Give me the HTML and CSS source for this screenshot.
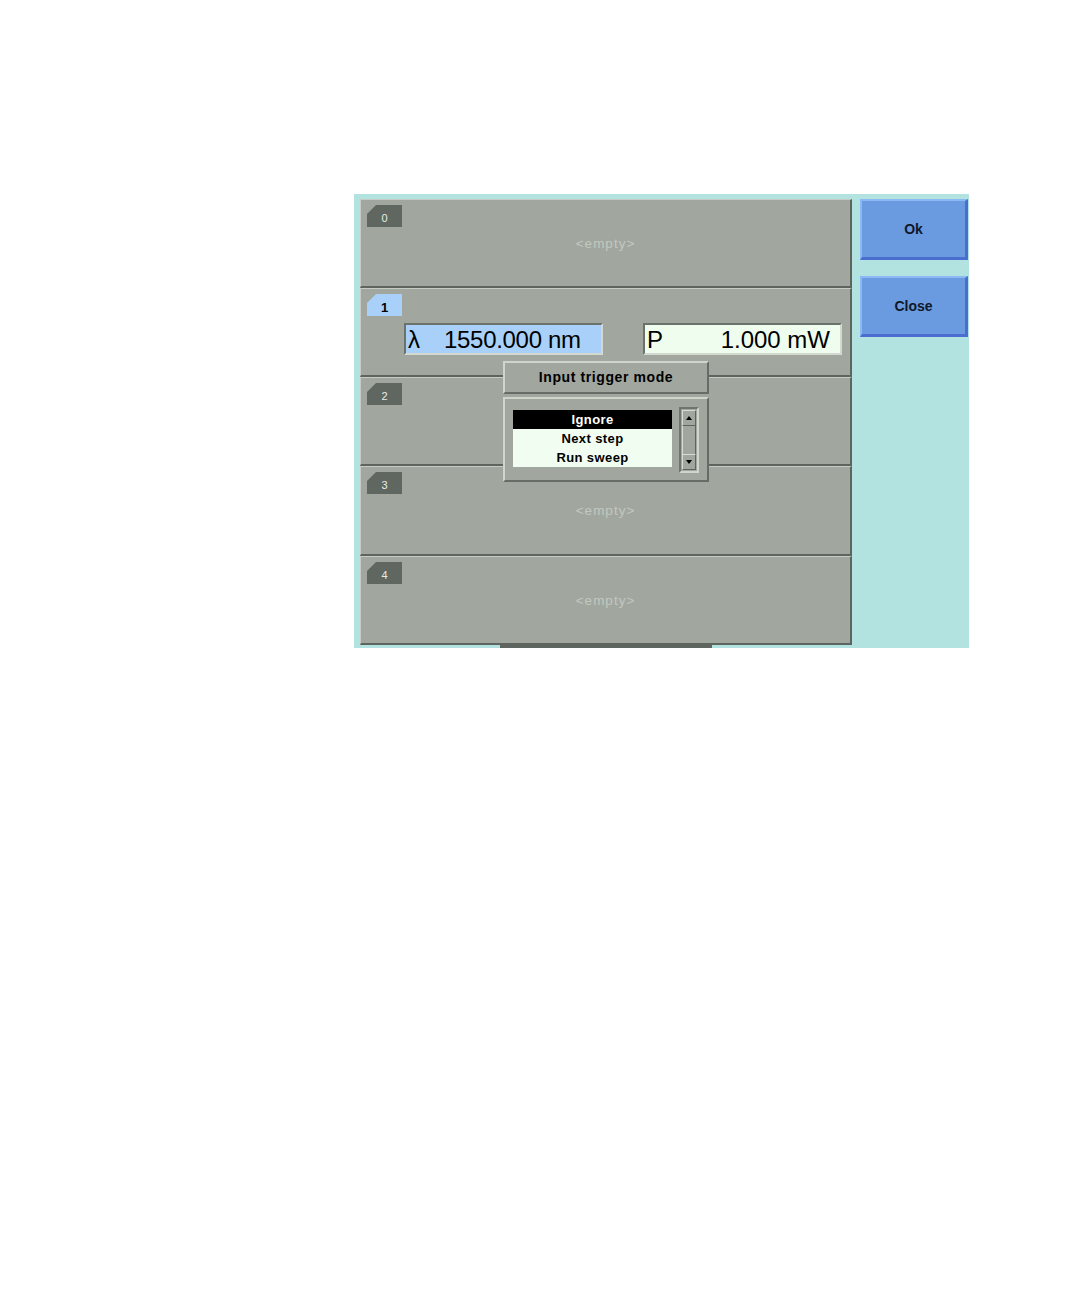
FILE: index.html
```html
<!DOCTYPE html>
<html>
<head>
<meta charset="utf-8">
<link rel="stylesheet" href="styles.css">
</head>
<body>
<div class="page">
  <div class="screen">
    <div class="rows">
      <div class="row"><div class="tab">0</div><div class="empty">&lt;empty&gt;</div></div>
      <div class="row">
        <div class="tab active">1</div>
        <div class="fields">
          <div class="field lambda"><span class="sym">λ</span><span class="val">1550.000 nm</span></div>
          <div class="field power"><span class="sym">P</span><span class="val">1.000 mW</span></div>
        </div>
      </div>
      <div class="row"><div class="tab">2</div></div>
      <div class="row tall"><div class="tab">3</div><div class="empty">&lt;empty&gt;</div></div>
      <div class="row"><div class="tab">4</div><div class="empty">&lt;empty&gt;</div></div>
      <div class="popup">
        <div class="pop-title">Input trigger mode</div>
        <div class="pop-body">
          <div class="list">
            <div class="item sel">Ignore</div>
            <div class="item">Next step</div>
            <div class="item">Run sweep</div>
          </div>
          <div class="scroll">
            <div class="sbtn"><span class="arrow up"></span></div>
            <div class="strack"></div>
            <div class="sbtn"><span class="arrow down"></span></div>
          </div>
        </div>
      </div>
      <div class="shadow"></div>
    </div>
    <div class="side">
      <div class="btn">Ok</div>
      <div class="btn">Close</div>
    </div>
  </div>
</div>
</body>
</html>
```
FILE: styles.css
```css
html, body { margin: 0; padding: 0; background: #ffffff; }
body { width: 1080px; height: 1296px; font-family: "Liberation Sans", Arial, sans-serif; }
.page { padding: 194px 0 0 354px; }
.screen {
  width: 615px; height: 454px; box-sizing: border-box;
  background: #b2e3e1; padding: 5px 0 0 6px;
  display: flex;
}
.rows { position: relative; width: 492px; display: flex; flex-direction: column; }
.row {
  position: relative; height: 89px; flex: none; box-sizing: border-box;
  background: #a1a69e;
  border-top: 1px solid #c6cbc3; border-left: 1px solid #c6cbc3;
  border-bottom: 2px solid #5e645e; border-right: 2px solid #5e645e;
  padding: 5px 0 0 6px;
}
.row.tall { height: 90px; }
.tab {
  width: 35px; height: 22px; background: #5f6760; color: #e8ece6;
  font-size: 11px; line-height: 26px; text-align: center;
  clip-path: polygon(9px 0, 100% 0, 100% 100%, 0 100%, 0 9px);
}
.tab.active { background: #a8d0f8; color: #000; font-weight: bold; font-size: 13px; line-height: 27px; }
.empty {
  text-align: center; color: #c3c8c0; font-size: 13.5px; letter-spacing: 1px;
  margin: 9px 6px 0 0;
}
.fields { display: flex; justify-content: space-between; padding: 7px 8px 0 37px; }
.field {
  width: 199px; height: 32px; box-sizing: border-box;
  border-top: 2px solid #6b716b; border-left: 2px solid #6b716b;
  border-bottom: 2px solid #d4d9d0; border-right: 2px solid #d4d9d0;
  display: flex; align-items: center; font-size: 24px; color: #000;
  padding: 1px 8px 0 2px;
}
.lambda { background: #a8d0f8; }
.lambda .val { margin-left: 24px; letter-spacing: -0.3px; }
.power { background: #eefdee; justify-content: space-between; padding-right: 10px; }
.popup {
  position: absolute; left: 143px; top: 162px; width: 206px;
  display: flex; flex-direction: column; gap: 3px;
}
.pop-title, .pop-body {
  background: #a1a69e; box-sizing: border-box;
  border-top: 2px solid #d0d5cc; border-left: 2px solid #d0d5cc;
  border-bottom: 2px solid #666c66; border-right: 2px solid #666c66;
}
.pop-title {
  height: 33px; text-align: center; font-weight: bold; font-size: 14px;
  letter-spacing: 0.6px; line-height: 29px; color: #000;
}
.pop-body { height: 85px; display: flex; padding: 10px 0 0 8px; gap: 7px; }
.list { width: 159px; height: 57px; background: #f2fdf2; margin-top: 1px; }
.item { height: 19px; line-height: 19px; text-align: center; font-size: 13px; font-weight: bold; letter-spacing: 0.4px; color: #000; }
.item.sel { background: #000; color: #fff; }
.scroll {
  width: 20px; height: 66px; box-sizing: border-box; margin-top: -2px;
  border-top: 2px solid #6e746e; border-left: 2px solid #6e746e;
  border-bottom: 2px solid #d0d5cc; border-right: 2px solid #d0d5cc;
  display: flex; flex-direction: column; padding: 1px;
}
.sbtn {
  height: 16px; box-sizing: border-box; background: #a1a69e;
  border-top: 1px solid #d8dcd4; border-left: 1px solid #d8dcd4;
  border-bottom: 1px solid #5e645e; border-right: 1px solid #5e645e;
  display: flex; align-items: center; justify-content: center;
}
.strack { flex: 1; background: #a1a69e; border-left: 1px solid #d8dcd4; border-right: 1px solid #5e645e; }
.arrow { width: 0; height: 0; border-left: 3px solid transparent; border-right: 3px solid transparent; }
.arrow.up { border-bottom: 4px solid #000; }
.arrow.down { border-top: 4px solid #000; }
.shadow { position: absolute; left: 140px; top: 446px; width: 212px; height: 3px; background: #5e645e; }
.side { display: flex; flex-direction: column; gap: 16px; margin-left: 8px; }
.btn {
  width: 108px; height: 61px; box-sizing: border-box;
  background: #6a9ae0; color: #101828;
  border-top: 2px solid #8cb8f4; border-left: 2px solid #8cb8f4;
  border-bottom: 3px solid #4a6ed0; border-right: 3px solid #4a6ed0;
  font-weight: bold; font-size: 14px; text-align: center; padding-top: 20px;
}
```
